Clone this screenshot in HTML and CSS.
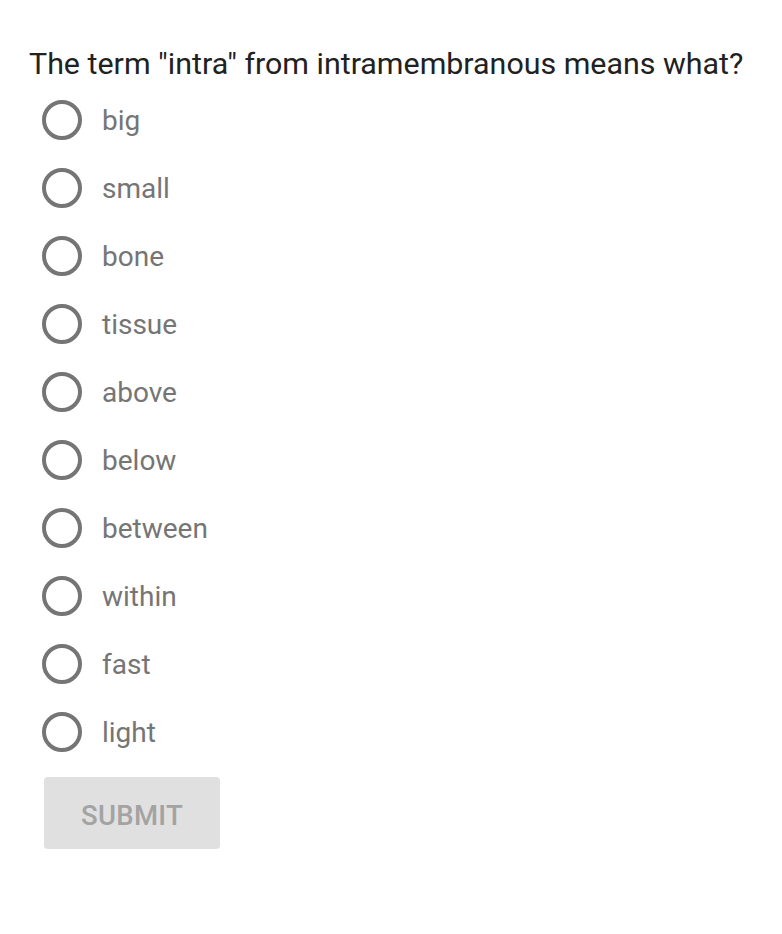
FILE: index.html
```html
<!DOCTYPE html>
<html>
<head>
<meta charset="utf-8">
<link rel="stylesheet" href="styles.css">
</head>
<body>
<div class="quiz">
  <h1 class="question">The term "intra" from intramembranous means what?</h1>
  <div class="options">
    <label class="option"><span class="radio"></span><span class="label">big</span></label>
    <label class="option"><span class="radio"></span><span class="label">small</span></label>
    <label class="option"><span class="radio"></span><span class="label">bone</span></label>
    <label class="option"><span class="radio"></span><span class="label">tissue</span></label>
    <label class="option"><span class="radio"></span><span class="label">above</span></label>
    <label class="option"><span class="radio"></span><span class="label">below</span></label>
    <label class="option"><span class="radio"></span><span class="label">between</span></label>
    <label class="option"><span class="radio"></span><span class="label">within</span></label>
    <label class="option"><span class="radio"></span><span class="label">fast</span></label>
    <label class="option"><span class="radio"></span><span class="label">light</span></label>
  </div>
  <button class="submit" disabled>SUBMIT</button>
</div>
</body>
</html>
```
FILE: styles.css
```css
html, body {
  margin: 0;
  padding: 0;
  background: #ffffff;
}
body {
  font-family: Roboto, "Liberation Sans", sans-serif;
}
.quiz {
  padding: 44px 0 0 29px;
}
.question {
  margin: 0;
  font-size: 30.4px;
  font-weight: 400;
  line-height: 40px;
  color: #212121;
  white-space: nowrap;
}
.options {
  display: flex;
  flex-direction: column;
  margin-top: 2px;
  padding-left: 13px;
}
.option {
  display: flex;
  align-items: center;
  height: 68px;
}
.radio {
  box-sizing: border-box;
  width: 40px;
  height: 40px;
  border: 4px solid #757575;
  border-radius: 50%;
  flex: none;
}
.label {
  margin-left: 20px;
  font-size: 28px;
  color: #757575;
}
.submit {
  margin: 11px 0 0 15px;
  width: 176px;
  height: 72px;
  border: none;
  border-radius: 4px;
  background: #e0e0e0;
  color: #a3a3a3;
  font-family: Roboto, "Liberation Sans", sans-serif;
  font-size: 27.5px;
  font-weight: 500;
  letter-spacing: 0.3px;
  padding: 4px 0 0 0;
}
```
